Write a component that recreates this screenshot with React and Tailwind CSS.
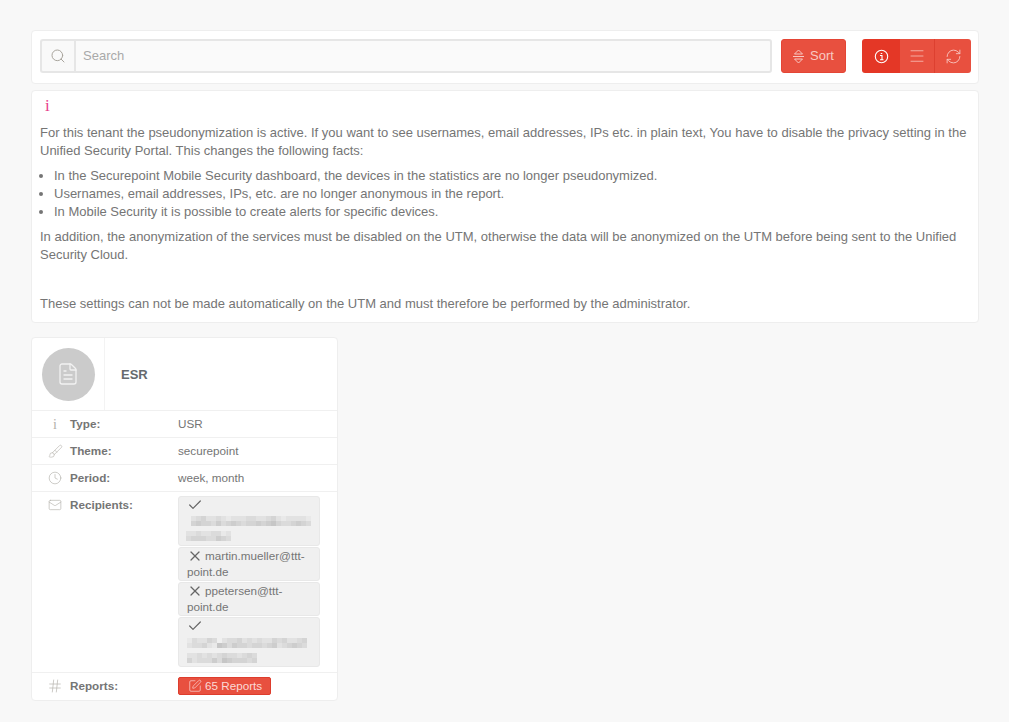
import { Search, Menu, RefreshCw, FileText, Brush, Clock, Mail, Hash, Check, X, SquarePen } from "lucide-react";

// pixelated addresses, one digit per 5px cell, higher = darker
const Mosaic = ({ lines }) => (
  <svg width="130" height="32" className="block -ml-px">
    {lines.map((line, i) =>
      line.rows.map((row, r) =>
        row.split("").map((d, c) => {
          const v = 240 - Number(d) * 7;
          return (
            <rect
              key={`${i}-${r}-${c}`}
              x={line.x + c * 5}
              y={line.y + r * 5}
              width="5"
              height="5"
              fill={`rgb(${v},${v},${v})`}
            />
          );
        })
      )
    )}
  </svg>
);

const Recipient = ({ ok, text, lines }) => (
  <div className="w-[142px] bg-[#f0f0f0] border border-[#e8e8e8] rounded-[3px] pl-2 pr-1 leading-[16px] overflow-hidden">
    <span className="inline-flex h-[16px] items-center align-top mr-[2px]">
      {ok ? <Check size={16} strokeWidth={1.8} className="text-[#666]" /> : <X size={16} strokeWidth={1.8} className="text-[#666]" />}
    </span>
    {lines ? <Mosaic lines={lines} /> : text}
  </div>
);

const Row = ({ icon, label, children }) => (
  <div className="flex border-b border-[#f0f0f0] pl-[13px] pt-[5px] pb-[5px]">
    <div className="w-[20px] h-[16px] flex items-center justify-center text-[#b3b0aa] shrink-0">{icon}</div>
    <div className="w-[108px] ml-[5px] font-bold shrink-0 leading-[16px]">{label}</div>
    <div className="leading-[16px]">{children}</div>
  </div>
);

export default function App() {
  return (
    <div className="min-h-[722px] bg-[#f8f8f8] pl-[31px] pr-[30px] pt-[30px] pb-[21px] text-[13px] text-[#757575] font-['Liberation_Sans',Arial,sans-serif]">
      {/* toolbar */}
      <div className="h-[54px] bg-white border border-[#eeeeee] rounded-[4px] pl-2 pr-[7px] pt-2 flex items-start">
        <div className="flex-1 flex h-[34px]">
          <div className="w-[34px] bg-[#f9f9f9] border-2 border-[#e6e6e6] border-r-0 rounded-l-[3px] flex items-center justify-center">
            <Search size={16} strokeWidth={1.5} className="text-[#a8a49c]" />
          </div>
          <div className="flex-1 bg-[#fafafa] border-2 border-[#e6e6e6] rounded-r-[3px] pl-[7px] flex items-center text-[#a9a9a9]">
            Search
          </div>
        </div>
        <button className="ml-[9px] w-[65px] h-[34px] bg-[#e8503f] border border-[#e44535] rounded-[3px] text-[#f8c9c3] flex items-center justify-center gap-[6px]">
          <svg width="11" height="15" viewBox="0 0 11 15" fill="none" stroke="currentColor" strokeWidth="1">
            <path d="M5.5 1 L9.5 5 H1.5 Z" />
            <path d="M0 7.5 H11" />
            <path d="M1.5 10 H9.5 L5.5 14 Z" />
          </svg>
          Sort
        </button>
        <div className="ml-4 w-[109px] h-[34px] flex rounded-[3px] overflow-hidden text-[#f8c9c3]">
          <div className="w-[38px] bg-[#e43726] flex items-center justify-center text-white">
            <svg width="15" height="15" viewBox="0 0 15 15" fill="none" stroke="currentColor" strokeWidth="1.1">
              <circle cx="7.5" cy="7.5" r="6.2" />
              <path d="M6 6.5 H8 V10.8 M6 10.8 H9.5" />
              <path d="M7.5 4 V5" strokeWidth="1.5" />
            </svg>
          </div>
          <div className="w-[35px] bg-[#e8503f] border-r border-[#dd4030] flex items-center justify-center">
            <Menu size={18} strokeWidth={1} />
          </div>
          <div className="flex-1 bg-[#e8503f] flex items-center justify-center">
            <RefreshCw size={17} strokeWidth={1.25} />
          </div>
        </div>
      </div>

      {/* notice */}
      <div className="mt-[6px] h-[233px] bg-white border border-[#eeeeee] rounded-[4px] px-2 pt-[6px] leading-[18px]">
        <div className="h-[18px] pl-[5px] font-['Liberation_Serif',serif] text-[#e83e8c] text-[17px] leading-[18px]">i</div>
        <p className="mt-[9px]">
          For this tenant the pseudonymization is active. If you want to see usernames, email addresses, IPs etc. in plain text, You have to disable the privacy setting in the Unified Security Portal. This changes the following facts:
        </p>
        <ul className="list-disc pl-[14px] mt-[7px]">
          <li>In the Securepoint Mobile Security dashboard, the devices in the statistics are no longer pseudonymized.</li>
          <li>Usernames, email addresses, IPs, etc. are no longer anonymous in the report.</li>
          <li>In Mobile Security it is possible to create alerts for specific devices.</li>
        </ul>
        <p className="mt-[7px]">
          In addition, the anonymization of the services must be disabled on the UTM, otherwise the data will be anonymized on the UTM before being sent to the Unified Security Cloud.
        </p>
        <p className="mt-[31px]">These settings can not be made automatically on the UTM and must therefore be performed by the administrator.</p>
      </div>

      {/* report card */}
      <div className="mt-[14px] w-[307px] bg-white border border-[#eeeeee] rounded-[4px] text-[11.7px]">
        <div className="h-[73px] flex border-b border-[#f0f0f0]">
          <div className="w-[73px] border-r border-[#f3f3f3] flex items-center justify-center">
            <div className="w-[53px] h-[53px] rounded-full bg-[#cbcbcb] flex items-center justify-center">
              <FileText size={24} strokeWidth={1.3} className="text-[#f2f2f2]" />
            </div>
          </div>
          <div className="flex-1 flex items-center pl-[16px] pt-[2px] font-bold text-[13px] text-[#666a6e]">ESR</div>
        </div>
        <Row icon={<span className="font-['Liberation_Serif',serif] text-[14px] leading-[15px]">i</span>} label="Type:">USR</Row>
        <Row icon={<Brush size={15} strokeWidth={1} />} label="Theme:">securepoint</Row>
        <Row icon={<Clock size={14} strokeWidth={1.1} />} label="Period:">week, month</Row>
        <div className="flex border-b border-[#f0f0f0] pl-[13px] pt-[4px] pb-[5px]">
          <div className="w-[20px] h-[18px] flex items-center justify-center text-[#b3b0aa] shrink-0"><Mail size={14} strokeWidth={1.1} /></div>
          <div className="w-[108px] ml-[5px] font-bold shrink-0 leading-[18px]">Recipients:</div>
          <div className="flex flex-col gap-px">
            <Recipient
              ok
              lines={[
                { x: 5, y: 3, rows: ["234223212223322342122221", "454435345434454564334543"] },
                { x: 0, y: 18, rows: ["223223312", "344433543"] },
              ]}
            />
            <Recipient text="martin.mueller@ttt-point.de" />
            <Recipient text="ppetersen@ttt-point.de" />
            <Recipient
              ok
              lines={[
                { x: 1, y: 4, rows: ["132243023342323224342234", "233421653544344345234543"] },
                { x: 1, y: 19, rows: ["22323234332343", "42333536544434"] },
              ]}
            />
          </div>
        </div>
        <div className="flex pl-[13px] pt-1 pb-[5px] items-center">
          <div className="w-[20px] flex justify-center text-[#b3b0aa] shrink-0"><Hash size={16} strokeWidth={1} /></div>
          <div className="w-[108px] ml-[5px] font-bold shrink-0">Reports:</div>
          <button className="w-[93px] h-[18px] bg-[#e8503f] border border-[#dd3d2d] rounded-[2px] text-[#fbd9d5] flex items-center pl-[9px] gap-[3px] leading-none">
            <SquarePen size={14} strokeWidth={1.2} />
            65 Reports
          </button>
        </div>
      </div>
    </div>
  );
}
